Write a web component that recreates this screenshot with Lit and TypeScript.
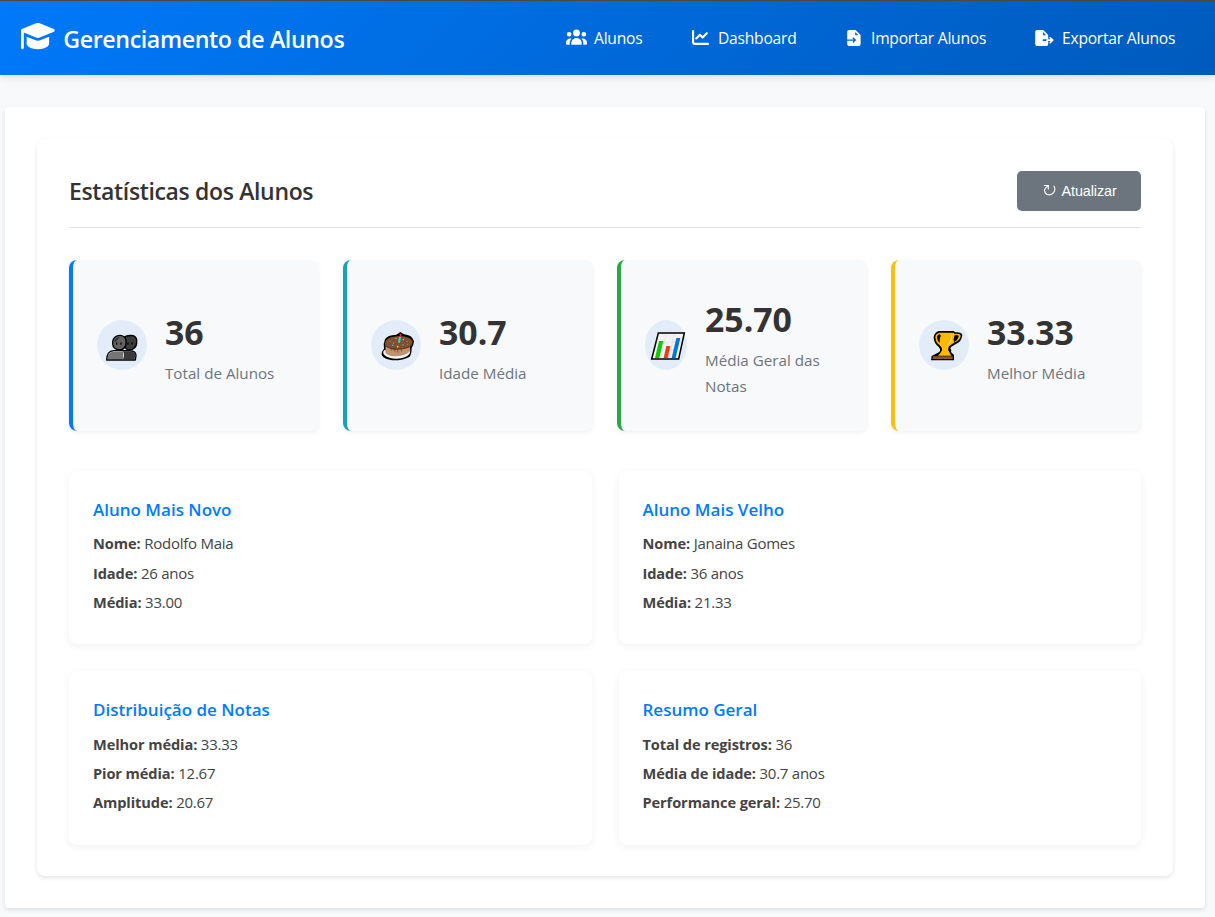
import { LitElement, html, css, svg } from "lit";
import { customElement } from "lit/decorators.js";

const capIcon = html`<svg class="cap" viewBox="0 0 576 512"><path fill="currentColor" d="M48 195.8l209.2 86.1c9.8 4 20.2 6.1 30.8 6.1s21-2.1 30.8-6.1l242.4-99.8c9-3.7 14.8-12.4 14.8-22.1s-5.8-18.4-14.8-22.1L318.8 38.1C309 34.1 298.6 32 288 32s-21 2.1-30.8 6.1L14.8 137.9C5.8 141.6 0 150.3 0 160L0 456c0 13.3 10.7 24 24 24s24-10.7 24-24l0-260.2zm48 71.7L96 384c0 53 86 96 192 96s192-43 192-96l0-116.6-142.9 58.9c-15.6 6.4-32.2 9.7-49.1 9.7s-33.5-3.3-49.1-9.7L96 267.4z"/></svg>`;

const usersIcon = html`<svg width="21" height="16.8" viewBox="0 0 640 512"><path fill="currentColor" d="M320 16a104 104 0 1 1 0 208 104 104 0 1 1 0-208zM96 88a72 72 0 1 1 0 144 72 72 0 1 1 0-144zM0 416c0-70.7 57.3-128 128-128 12.8 0 25.2 1.9 36.9 5.4-32.9 36.8-52.9 85.4-52.9 138.6l0 16c0 11.4 2.4 22.2 6.7 32L32 480c-17.7 0-32-14.3-32-32l0-32zm521.3 64c4.3-9.8 6.7-20.6 6.7-32l0-16c0-53.2-20-101.8-52.9-138.6 11.7-3.5 24.1-5.4 36.9-5.4 70.7 0 128 57.3 128 128l0 32c0 17.7-14.3 32-32 32l-86.7 0zM472 160a72 72 0 1 1 144 0 72 72 0 1 1 -144 0zM160 432c0-88.4 71.6-160 160-160s160 71.6 160 160l0 16c0 17.7-14.3 32-32 32l-256 0c-17.7 0-32-14.3-32-32l0-16z"/></svg>`;

const chartIcon = html`<svg width="17" height="17" viewBox="0 0 512 512"><path fill="currentColor" d="M64 64c0-17.7-14.3-32-32-32S0 46.3 0 64V400c0 44.2 35.8 80 80 80H480c17.7 0 32-14.3 32-32s-14.3-32-32-32H80c-8.8 0-16-7.2-16-16V64zm406.6 86.6c12.5-12.5 12.5-32.8 0-45.3s-32.8-12.5-45.3 0L320 210.7l-57.4-57.4c-12.5-12.5-32.8-12.5-45.3 0l-112 112c-12.5 12.5-12.5 32.8 0 45.3s32.8 12.5 45.3 0L240 221.3l57.4 57.4c12.5 12.5 32.8 12.5 45.3 0l128-128z"/></svg>`;

const importIcon = html`<svg width="14" height="16" viewBox="0 0 14 16"><path fill="currentColor" fill-rule="evenodd" d="M2.2 0H8.6L13.6 5V13.9C13.6 15.1 12.7 16 11.5 16H2.2C1 16 .2 15.1 .2 13.9V10.8H6.6L5.4 12.1L6.3 12.9L9.2 10.1L6.3 7.2L5.4 8.1L6.6 9.4H.2V2.1C.2 .9 1 0 2.2 0ZM8.2 2V4.4C8.2 5 8.6 5.3 9 5.3H11.4Z"/></svg>`;

const exportIcon = html`<svg width="19" height="16" viewBox="0 0 19 16"><path fill="currentColor" fill-rule="evenodd" d="M2.2 0H8.3L13.2 5V9.3H8.4C7.2 9.3 7.2 11.1 8.4 11.1H13.2V13.9C13.2 15.1 12.4 16 11.2 16H2.2C1 16 .2 15.1 .2 13.9V2.1C.2 .9 1 0 2.2 0ZM7.9 2V4.4C7.9 5 8.3 5.3 8.7 5.3H11.1Z"/><path fill="none" stroke="currentColor" stroke-width="1.7" stroke-linecap="round" stroke-linejoin="round" d="M12 10.2H17.4M15.2 7.8L17.7 10.2L15.2 12.6"/></svg>`;

const peopleArt = svg`
  <g stroke="#000" stroke-width="4" stroke-linejoin="round">
    <path stroke="none" fill="#767676" d="M31 118Q33 97 48 95H78V118Z"/>
    <path stroke="none" fill="#3a3a3a" d="M78 94H96Q113 95 115 105L113 118H78Q84 106 78 94Z"/>
    <path fill="none" d="M29 120Q30 93 49 92H98Q117 93 117 107L115 120Z"/>
    <path fill="#3b3b3b" d="M84 50Q95 45 109 47Q121 52 119 66Q120 77 111 85Q101 94 88 87Q79 77 80 65Z"/>
    <path fill="#626262" d="M59 48Q72 43 81 50Q89 56 87 70Q85 88 68 90Q48 88 47 72Q45 56 59 48Z"/>
  </g>
  <path fill="#303030" d="M51 67Q56 52 68 51Q62 61 55 65Z"/>
  <g fill="#000"><ellipse cx="59" cy="71" rx="2" ry="4"/><ellipse cx="72" cy="71" rx="2" ry="4"/><ellipse cx="93" cy="71" rx="2" ry="4"/><ellipse cx="105" cy="70" rx="2" ry="4"/></g>`;

const cakeArt = svg`
  <path fill="#000" d="M42 58Q49 45 76 44L88 36L99 43Q124 45 129 64Q128 76 122 84Q122 102 116 110Q96 122 64 121Q39 118 32 105Q31 94 39 86Q36 72 42 58Z"/>
  <path fill="#f4f4f4" d="M39 91Q34 99 40 105Q51 116 78 116Q105 115 116 101L118 90Z"/>
  <path fill="#c0936b" d="M44 75L43 98Q51 109 76 109Q104 108 117 94V77Z"/>
  <path fill="#80502f" d="M45 61Q55 49 86 48Q119 50 125 64Q125 77 111 84L93 86V97L89 88L82 88V102L78 89L73 90V98L69 90L62 88V95L59 86Q41 81 42 69Z"/>
  <path fill="none" stroke="#5c341d" stroke-width="3" d="M43 77Q53 87 80 87Q109 87 123 75"/>
  <path fill="none" stroke="#35d6e8" stroke-width="6" d="M87 51L84 68"/>
  <path fill="#e33b2f" d="M87 50Q84 44 88 40Q93 45 90 50Z"/>
  <g fill="#ffd23c"><circle cx="75" cy="55" r="2"/><circle cx="97" cy="59" r="2"/><circle cx="80" cy="80" r="2.5"/><circle cx="68" cy="69" r="1.6"/></g>
  <g fill="#e86c9a"><circle cx="57" cy="64" r="2"/><circle cx="108" cy="64" r="2"/><circle cx="110" cy="73" r="1.6"/></g>
  <g fill="#35c6d8"><circle cx="65" cy="76" r="2.2"/><circle cx="96" cy="75" r="2.2"/></g>`;

const barsArt = svg`
  <path fill="#f3f3f3" stroke="#000" stroke-width="4.5" d="M40 39H118L101 117H20Z"/>
  <path fill="none" stroke="#d5d5d5" stroke-width="1.5" d="M63 42L46 114M88 42L72 114M37 66H109M30 90H104"/>
  <path fill="#16c60c" d="M42 63H55L43 114H30Z"/>
  <path fill="#f03a17" d="M64 78H76L68 114H56Z"/>
  <path fill="#0078d7" d="M94 54H106L92 114H80Z"/>`;

const trophyArt = svg`
  <path fill="#000" d="M59 33H104L108 37Q127 35 130 45Q128 65 111 72L96 81Q92 87 97 91L96 96L105 105V121H36L38 108L48 103L55 99Q60 97 63 93Q66 88 59 81Q44 69 44 52Q45 38 59 33Z"/>
  <path fill="#ffb900" d="M61 38H104L107 42Q124 40 125 48Q123 61 107 67L91 78Q84 88 91 97L97 107H57Q66 98 69 91Q70 83 62 76Q49 66 49 51Q50 41 61 38Z"/>
  <path fill="#000" d="M63 43Q54 43 54 54Q55 64 63 69Q60 55 66 48ZM107 46Q120 43 119 50Q116 61 105 66Q102 57 107 46Z"/>
  <path fill="none" stroke="#fff0a8" stroke-width="3" stroke-linecap="round" d="M98 48Q98 65 86 75"/>
  <path fill="#8e562e" d="M42 109H101V117H40Z"/>`;

const stats = [
  { tone: "blue", art: peopleArt, value: "36", label: "Total de Alunos" },
  { tone: "teal", art: cakeArt, value: "30.7", label: "Idade Média" },
  { tone: "green", art: barsArt, value: "25.70", label: "Média Geral das Notas" },
  { tone: "gold", art: trophyArt, value: "33.33", label: "Melhor Média" },
];

const details = [
  { title: "Aluno Mais Novo", rows: [["Nome:", "Rodolfo Maia"], ["Idade:", "26 anos"], ["Média:", "33.00"]] },
  { title: "Aluno Mais Velho", rows: [["Nome:", "Janaina Gomes"], ["Idade:", "36 anos"], ["Média:", "21.33"]] },
  { title: "Distribuição de Notas", rows: [["Melhor média:", "33.33"], ["Pior média:", "12.67"], ["Amplitude:", "20.67"]] },
  { title: "Resumo Geral", rows: [["Total de registros:", "36"], ["Média de idade:", "30.7 anos"], ["Performance geral:", "25.70"]] },
];

@customElement("app-root")
export class AppRoot extends LitElement {
  static styles = css`
    :host { display: block; min-height: 917px; box-sizing: border-box; background: #f8f9fb; color: #333;
      font-family: "Segoe UI", "Open Sans", sans-serif; overflow: hidden; }
    * { box-sizing: border-box; margin: 0; }
    svg { display: block; flex: none; }
    .header { height: 75px; border-top: 1px solid #484848; background: linear-gradient(135deg, #0079fa, #005abc) padding-box;
      box-shadow: 0 2px 8px rgba(0,0,0,.12); color: #fff; display: flex; justify-content: space-between; padding: 0 41px 0 21px; }
    .brand { display: flex; align-items: flex-start; gap: 8.5px; padding-top: 20px; }
    .cap { width: 33.75px; height: 30px; }
    .brand h1 { font-size: 23.2px; line-height: 37px; font-weight: 600; white-space: nowrap; letter-spacing: -0.38px; }
    .nav { display: flex; align-items: center; padding-bottom: 1px; }
    .link { display: flex; align-items: center; font-size: 15.6px; line-height: 24px; white-space: nowrap; font-weight: 500; letter-spacing: -0.22px; }
    .link .text { display: block; }
    .users { width: 126px; gap: 7px; }
    .chart { width: 155px; gap: 9px; }
    .import { width: 188px; gap: 10px; }
    .export { width: 139px; gap: 8px; }
    .page { margin: 32px 10px 0 5px; height: 801px; background: #fff; border-radius: 4px; padding: 32px; box-shadow: 0 2px 4px rgba(0,0,0,.1); }
    .panel { height: 737px; border-radius: 8px; padding: 32px; box-shadow: 0 2px 4px rgba(0,0,0,.1); background: #fff; }
    .top { display: flex; justify-content: space-between; height: 57px; border-bottom: 1px solid #dee2e6; }
    .top h2 { font-size: 23px; line-height: 40px; font-weight: 600; letter-spacing: -0.35px; white-space: nowrap; }
    .refresh { width: 124px; height: 40px; border: 0; border-radius: 5px; background: #6c757d; color: #fff; display: flex;
      align-items: center; padding: 0 0 0 25.5px; gap: 6px; font: 14.4px "Liberation Sans", Arial, sans-serif; letter-spacing: -0.1px; }
    .refresh svg { margin-bottom: 2px; }
    .stats { display: grid; grid-template-columns: repeat(4, 1fr); gap: 24px; margin-top: 32px; }
    .stat { height: 171px; border-left: 4px solid; border-radius: 8px; background: #f8f9fb; padding: 0 20px 0 24px; display: flex; align-items: center;
      gap: 18px; box-shadow: 0 2px 4px rgba(0,0,0,.06); }
    .blue { border-color: #007bff; } .teal { border-color: #17a2b8; } .green { border-color: #28a745; } .gold { border-color: #ffc107; }
    .badge { width: 50px; height: 50px; border-radius: 50%; background: #e3edfa; flex: none; margin-bottom: 1px; }
    .green .badge { width: 42px; }
    .value { font-size: 33.8px; line-height: 54px; font-weight: 700; }
    .label { font-size: 15.2px; line-height: 26px; color: #6c757d; margin-top: 1px; }
    .details { display: grid; grid-template-columns: 1fr 1fr; gap: 26.85px 27px; margin-top: 40px; }
    .detail { height: 173.4px; border-radius: 8px; padding: 24px; box-shadow: 0 2px 8px rgba(0,0,0,.06); background: #fff; }
    .detail h3 { font-size: 17px; line-height: 29px; font-weight: 600; color: #007bff; margin-bottom: 5.35px; }
    .detail p { font-size: 15px; line-height: 29.2px; letter-spacing: -0.25px; white-space: nowrap; color: #444; }
    .detail b { font-weight: 700; font-size: 14.6px; letter-spacing: -0.1px; line-height: 1; }
  `;

  render() {
    return html`
      <header class="header">
        <div class="brand">${capIcon}<h1>Gerenciamento de Alunos</h1></div>
        <nav class="nav">
          <a class="link users">${usersIcon}<span class="text">Alunos</span></a>
          <a class="link chart">${chartIcon}<span class="text">Dashboard</span></a>
          <a class="link import">${importIcon}<span class="text">Importar Alunos</span></a>
          <a class="link export">${exportIcon}<span class="text">Exportar Alunos</span></a>
        </nav>
      </header>
      <main class="page">
        <section class="panel">
          <div class="top">
            <h2>Estatísticas dos Alunos</h2>
            <button class="refresh">
              <svg width="13" height="13" viewBox="0 0 13 13"><path fill="none" stroke="currentColor" stroke-width="1.1" d="M10.7 1.7Q13 5 10.6 8.6Q7.7 12 3.7 10.2Q.4 7.8 2.2 4.5L4.9 1.6M.9 1.5H5.3V5.6"/></svg>
              <span>Atualizar</span>
            </button>
          </div>
          <div class="stats">
            ${stats.map((s) => html`
              <article class="stat ${s.tone}">
                <div class="badge"><svg width="50" height="50" viewBox="0 0 150 150">${s.art}</svg></div>
                <div><div class="value">${s.value}</div><div class="label">${s.label}</div></div>
              </article>`)}
          </div>
          <div class="details">
            ${details.map((d) => html`
              <article class="detail">
                <h3>${d.title}</h3>
                ${d.rows.map(([k, v]) => html`<p><b>${k}</b> ${v}</p>`)}
              </article>`)}
          </div>
        </section>
      </main>`;
  }
}
